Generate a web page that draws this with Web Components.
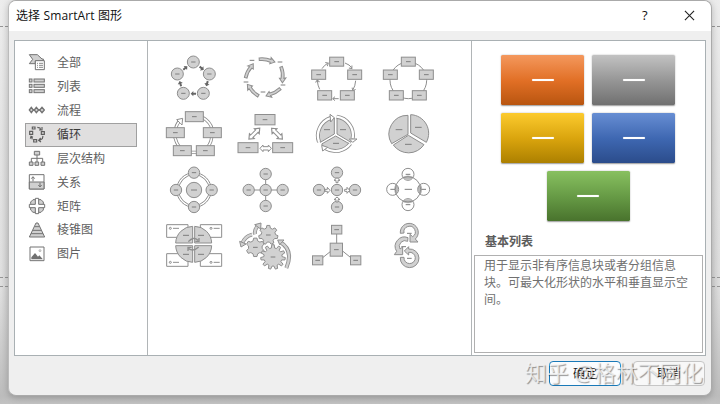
<!DOCTYPE html>
<html lang="zh-CN">
<head>
<meta charset="utf-8">
<title>选择 SmartArt 图形</title>
<style>
html,body{margin:0;width:720px;height:404px;overflow:hidden}
body{font-family:"Noto Sans","Noto Sans CJK SC",sans-serif;font-size:12px;color:#606060}
</style>
</head>
<body>
<smart-desktop>
  <smart-dialog>
    <title-bar slot="title">选择 SmartArt 图形</title-bar>
    <category-list slot="nav"></category-list>
    <layout-gallery slot="gallery"></layout-gallery>
    <layout-preview slot="preview">
      <span slot="name">基本列表</span>
      <span slot="text">用于显示非有序信息块或者分组信息块。可最大化形状的水平和垂直显示空间。</span>
    </layout-preview>
    <push-button slot="actions" primary>确定</push-button>
    <push-button slot="actions">取消</push-button>
  </smart-dialog>
  <water-mark slot="overlay">知乎 @格林不同化</water-mark>
</smart-desktop>
<script>
const define = (name, html, after) => customElements.define(name, class extends HTMLElement {
  constructor() {
    super();
    this.attachShadow({mode: 'open'}).innerHTML = typeof html === 'function' ? html() : html;
    if (after) after(this);
  }
});

define('smart-desktop', `<style>
:host{display:block;position:relative;width:720px;height:404px;overflow:hidden;box-sizing:border-box;padding:0 8px 8px;
 background:linear-gradient(90deg,#e2e2e2,#cfcfcf 8px,#cfcfcf 712px,#dedede);}
.bg{position:absolute;inset:0;background:linear-gradient(#f0f0f0cc 0,#e6e6e688 130px,#d8d8d833 290px,#bcbcbc 396px,#c2c2c2 404px)}
.dot{position:absolute;left:0;right:0;border-top:1px dashed #959595}
slot{position:relative}
</style><div class="bg"></div><div class="dot" style="top:26px"></div><div class="dot" style="top:277px"></div><div class="dot" style="top:286px"></div>
<slot></slot><slot name="overlay"></slot>`);

define('smart-dialog', `<style>
:host{display:flex;flex-direction:column;position:relative;width:704px;height:396px;box-sizing:border-box;background:#efefef;border:1px solid #aaa;border-left-color:#bbb;border-radius:8px;overflow:hidden;box-shadow:0 2px 6px #0003}
.main{display:grid;grid-template-columns:132px 323px 233px;gap:1px;margin:9px 5px 0;height:314px;border:1px solid #a9b0b3;background:#b1b5b7}
.main>*{background:#fff;min-width:0}
.foot{display:flex;justify-content:flex-end;gap:12px;padding:5px 6px 0 0}
</style><slot name="title"></slot><div class="main"><div><slot name="nav"></slot></div><div><slot name="gallery"></slot></div><div><slot name="preview"></slot></div></div>
<div class="foot"><slot name="actions"></slot></div>`);

define('title-bar', `<style>
:host{display:flex;align-items:center;height:30px;flex:none;background:#fff;color:#111;padding:0 12px 0 7px;font:12px/28px "Open Sans","Noto Sans CJK SC",sans-serif}
.t{flex:1;letter-spacing:.12px}.q{font-size:13px;width:8px;margin-right:34px;line-height:28px;padding-bottom:2px}svg{width:11px;height:11px;margin-right:4px;margin-bottom:1px}
</style><span class="t"><slot></slot></span><span class="q">?</span><svg viewBox="0 0 12 12"><path d="M1 1 11 11M11 1 1 11" stroke="#222" stroke-width="1.2"/></svg>`);

/* Category icons, drawn on a 54-unit square shown at 18px. */
const navIcons = {
  '全部': `<path class="f" d="M4 5H28L42 18H46V24H22V32H4L14 19Z"/><path class="w" d="M22 23H49V50H22Z"/><path stroke-width="2.5" d="M27 31h3M27 37h3M27 43h3M33 31h12M33 37h12M33 43h12"/>`,
  '列表': [6,22,38].map(y=>`<rect class="f" x="4" y="${y}" width="8" height="9"/><rect class="f" x="18" y="${y}" width="31" height="9"/>`).join(''),
  '流程': `<path d="M12 27H46" stroke-width="4"/><path class="f" d="M4 27 10 19 16 27 10 35ZM19 27 25 19 32 27 25 35ZM35 27 42 19 49 27 42 35Z" stroke-width="4"/>`,
  '循环': `<path d="M13 6H21V12H13ZM5 19H14V28H5ZM40 20H49V28H40ZM17 44H26V51H17ZM28 7 36 9 38 15M42 6V15H33M45 33 43 41 35 46M38 39 32 46 39 51M7 41 9 34 15 37M10 35 13 43" stroke-width="3.5"/>`,
  '层次结构': `<path d="M27 18V40M10 40V28H44V40" fill="none"/><path class="f" d="M19 7H35V18H19ZM4 39H15V49H4ZM21 39H32V49H21ZM39 39H50V49H39Z"/>`,
  '关系': `<path class="w" d="M4 5H48V48H4Z"/><path class="f" d="M4 27H48V48H4Z"/><path fill="none" d="M15 25V12M10 17 15 11 20 17M36 29V41M31 36 36 42 41 36"/>`,
  '矩阵': `<path class="f" d="M8 19V15L15 8H39L46 15V39L39 46H15L8 39Z"/><path class="w" d="M22 4H32V22H50V32H32V50H22V32H4V22H22Z"/>`,
  '棱锥图': `<path class="f" d="M24 6H30L50 48H4Z"/><path d="M20 17H34M15 28H39M9 38H45"/>`,
  '图片': `<path class="w" d="M6 6H48V47H6Z"/><path d="M10 43V37L21 24 30 35 34 31 44 42V43Z" fill="#707070" stroke="none"/><circle cx="36" cy="17" r="3" stroke="#bbb" fill="#ddd"/>`
};
define('category-item', `<style>
:host{display:flex;align-items:center;box-sizing:border-box;height:23.9px;padding:0 0 0 2px;border:1px solid transparent;line-height:20px;color:#606060}
:host([selected]){background:#e0dfdf;border:1px dotted #666;color:#3a3a3a;outline:1px solid #a0a0a0;outline-offset:-1px}
svg{width:18px;height:18px;margin:0 11px 1px 0;stroke:#737373;stroke-width:3;fill:none}
:host([selected]) svg{stroke:#5e5e5e}
.f{fill:#d0d0d0}.w{fill:#fff}span{padding-top:.5px}
</style><svg viewBox="0 0 54 54"></svg><span><slot></slot></span>`, el => {
  el.draw = k => el.shadowRoot.querySelector('svg').innerHTML = navIcons[k];
});
define('category-list', () => `<style>:host{display:block;padding:10px 10px 0}</style>` +
  Object.keys(navIcons).map(k => `<category-item${k==='循环'?' selected':''}>${k}</category-item>`).join(''),
  el => el.shadowRoot.querySelectorAll('category-item').forEach(i => i.draw(i.textContent)));

/* Gallery thumbnails: three drawing units per pixel. */
const dash = (x,y,w=14) => `<path class="d" d="M${x-w/2} ${y}h${w}"/>`;
const ball = (x,y,r=18) => `<circle class="f" cx="${x}" cy="${y}" r="${r}"/>` + dash(x,y,r>20?18:13);
const box = (x,y,w,h) => `<rect class="f" x="${x-w/2}" y="${y-h/2}" width="${w}" height="${h}"/>` + dash(x,y);
const tube = (d,w=10,c='#fff') => `<path fill="none" stroke="#8c8c8c" stroke-width="${w}" d="${d}"/><path fill="none" stroke="${c}" stroke-width="${w-5}" d="${d}"/>`;
const turn = (x,y,a,s) => `<g transform="translate(${x} ${y}) rotate(${a})">${s}</g>`;
const solid = `<path d="M-8-3H0V-8L8 0 0 8V3H-8Z" fill="#666" stroke="none"/>`;
const bent = `<path class="f" d="M-23-6Q-2-9 13-3L13-9 25 4 10 10 11 5Q-3-1-22 2Z"/>`;
const both = `<path class="w" d="M-17 0-8-10V-5H8V-10L17 0 8 10V5H-8V10Z"/>`;
const block = `<path class="w" d="M-7-3H0V-9L8 0 0 9V3H-7Z"/>`;
const gear = (x,y,r,n) => {
  let p = [];
  for (let i=0;i<n;i++) for (const [o,k] of [[-.32,.74],[-.17,1],[.17,1],[.32,.74]]) {
    const a = (i+o)*2*Math.PI/n - Math.PI/2;
    p.push((x+Math.cos(a)*r*k).toFixed(1)+' '+(y+Math.sin(a)*r*k).toFixed(1));
  }
  return `<path class="f" d="M${p.join('L')}Z"/>` + dash(x,y);
};
const thin = (x,y,a) => turn(x,y,a,`<path fill="none" d="M-6-6 1 0-6 6"/>`);
const thumbs = [
  ball(130,51)+ball(82,87)+ball(178,87)+ball(100,145)+ball(160,145)+turn(106,69,-40,solid)+turn(155,70,40,solid)+turn(171,116,107,solid)+turn(130,146,180,solid)+turn(91,116,-107,solid),
  turn(350,46,3,bent)+turn(396,88,78,bent)+turn(371,142,146,bent)+turn(309,137,219,bent)+turn(297,78,-69,bent)+dash(306,46)+dash(390,51)+dash(399,120)+dash(339,141)+dash(288,111),
  `<path fill="none" d="M66 71Q72 61 83 55M135 54Q149 59 155 68M167 107Q166 123 158 136M116 161H99M59 133Q53 121 52 107"/>`+thin(84,55,-30)+thin(155,70,50)+thin(159,136,115)+thin(99,161,180)+thin(52,106,-95)+box(110,50,42,27)+box(56,89,42,28)+box(164,89,42,28)+box(74,151,42,28)+box(142,151,42,28),
  `<circle cx="325" cy="106" r="55" fill="none"/>`+box(325,50,42,27)+box(271,89,42,28)+box(379,89,42,28)+box(289,151,42,28)+box(358,151,42,28),
  tube('M76 262Q76 240 91 226M157 217Q181 230 187 254M74 275Q78 292 89 308M185 274Q185 292 173 306M120 322H145')+`<path class="w" d="M80 224 98 220 96 240 91 235 84 228Z"/>`+box(133,215,54,30)+box(76,263,54,30)+box(187,263,54,30)+box(97,317,54,30)+box(166,317,54,30),
  box(345,224,60,31)+box(294,308,60,30)+box(398,308,60,30)+turn(313,266,-45,`<g transform="scale(1.35 1)">${both}</g>`)+turn(381,266,45,`<g transform="scale(1.35 1)">${both}</g>`)+turn(347,310,0,both),
  `<path class="f" d="M103 267V219A51 51 0 0 0 61 292ZM111 267V219A51 51 0 0 1 153 292ZM107 273 149 297A50 50 0 0 1 65 297Z"/>`+tube('M57 291A56 56 0 0 1 92 219M110 215A56 56 0 0 1 158 280M151 296A56 56 0 0 1 77 310',12)+`<path class="w" d="M90 208 103 218 92 231ZM148 282H171L158 292ZM65 301 68 318 83 307Z"/>`+dash(81,254,18)+dash(129,254,18)+dash(108,295,18),
  `<path class="f" d="M324 211A56 56 0 0 0 275 296L324 268ZM332 209A56 56 0 0 1 379 292L332 264ZM325 271 372 299A56 56 0 0 1 280 300Z"/>`+dash(297,254,20)+dash(355,247,20)+dash(325,298,20),
  `<g><circle cx="132" cy="90" r="52" fill="none"/><circle cx="132" cy="90" r="46" fill="none"/></g>`+ball(132,90,23)+ball(132,38,17)+ball(132,141,17)+ball(78,90,17)+ball(185,90,17),
  `<path d="M296 90H398M347 42V138"/>`+ball(347,90,17)+ball(347,42,17)+ball(347,138,17)+ball(296,90,17)+ball(398,90,17),
  ball(111,90,17)+ball(111,38,17)+ball(111,141,17)+ball(57,90,17)+ball(165,90,17)+turn(111,61,-90,block)+turn(111,119,-90,block)+turn(82,91,0,block)+turn(141,91,0,block),
  `<path fill="#bbb" stroke="none" d="M307 51Q324 42 341 51 324 67 307 51ZM307 125Q324 134 341 125 324 110 307 125ZM287 72Q278 88 287 104 303 88 287 72ZM362 72Q371 88 362 104 345 88 362 72Z"/><circle cx="324" cy="88" r="38" fill="none"/>`+[[324,43],[278,88],[371,88],[324,134]].map(([x,y])=>`<circle cx="${x}" cy="${y}" r="18" fill="none"/>`+dash(x,y)).join('')+dash(325,88,22),
  `<path class="w" d="M50 194H114V232H50ZM151 194H215V232H151ZM50 281H114V319H50ZM151 281H215V319H151Z"/>`+[[61,205],[183,205],[61,307],[183,307]].map(([x,y])=>`<circle cx="${x}" cy="${y}" r="3" fill="none"/><path d="M${x+8} ${y}h18"/>`).join('')+`<path d="M128 197V311M74 253H188" stroke="#fff" stroke-width="9"/><path class="f" d="M128 199V249H77A52 52 0 0 1 128 199ZM134 199A52 52 0 0 1 185 249H134ZM77 257H128V307A52 52 0 0 1 77 257ZM134 257H185A52 52 0 0 1 134 307Z"/>`+dash(108,226,18)+dash(153,226,18)+dash(108,283,18)+dash(153,283,18)+`<path fill="none" d="M115 245Q130 228 144 241M147 234V244H136M146 261Q130 276 116 266M114 273V262H125" stroke-width="4"/>`,
  tube('M276 252Q284 229 306 224M315 223Q312 211 324 196M390 246Q432 270 409 324',12,'#d1d1d1')+`<path class="f" d="M269 244 273 261 288 252ZM314 194 333 189 332 207ZM383 240 402 240 389 254Z"/>`+gear(355,225,29,7)+gear(316,262,28,6)+gear(369,291,37,11),
  `<path d="M110 220V260M97 270 54 304M124 270 166 304"/>`+box(110,209,31,26)+box(109,269,37,39)+box(53,301,31,27)+box(167,301,31,27),
  `<path class="f" d="M301 220A27 27 0 1 1 346 237L354 246H330V223L338 230A17 17 0 1 0 312 219ZM324 233A28 28 0 0 0 290 274L283 284H308V261L300 267A17 17 0 0 1 323 244ZM301 292A28 28 0 1 0 326 267V260L313 273 326 285V277A17 17 0 1 1 312 292Z"/>`+dash(328,220)+dash(311,260)+dash(328,295)
];
define('layout-gallery', () => `<style>
:host{display:grid;grid-template-columns:repeat(4,72px);grid-auto-rows:56px;padding:9px 0 0 10px}
svg{width:72px;height:56px;stroke:#8e8e8e;stroke-width:3;fill:#d3d3d3}
.f{fill:#d1d1d1}.w{fill:#fff}.d{stroke:#7e7e7e;stroke-width:3}
</style>` + thumbs.map((s,i) => `<svg viewBox="${[24,240,6,222][i%4]} ${[15,183,6,174][i>>2]} 216 168">${s}</svg>`).join(''));

define('layout-preview', `<style>
:host{display:flex;flex-direction:column;height:314px}
.tiles{display:flex;flex-wrap:wrap;justify-content:center;gap:7.5px 8px;padding:13.5px 30px 0 29px;height:167.5px;align-content:flex-start}
.tiles i{display:flex;align-items:center;justify-content:center;width:83px;height:50.6px;border-radius:1.5px;box-shadow:0 .5px 1.5px #0006}
.tiles i::before{content:"";width:22px;height:2px;background:#fff;border-radius:1px;box-shadow:0 0 1px #fff8}
.name{font-weight:bold;color:#5c5c5c;padding:0 13px;line-height:20px;margin-top:10px}
.text{box-sizing:border-box;width:229px;height:98px;margin:3px 0 0 2px;padding:2px 10px 0 9px;border:1px solid #b0b0b0;line-height:16.9px;color:#707070}
</style><div class="tiles">
<i style="background:linear-gradient(#f4985d,#e16f25 52%,#b85510)"></i><i style="background:linear-gradient(#c2c2c2,#959595 52%,#707070)"></i>
<i style="background:linear-gradient(#fccb2e,#d9a40d 52%,#ac8000)"></i><i style="background:linear-gradient(#678ed3,#3e67b1 52%,#2b4c8b)"></i>
<i style="background:linear-gradient(#88c060,#669a45 52%,#49732d)"></i></div>
<div class="name"><slot name="name"></slot></div><div class="text"><slot name="text"></slot></div>`);

define('push-button', `<style>
:host{display:flex;align-items:center;justify-content:center;box-sizing:border-box;width:72px;height:25px;border:1px solid #c6c6c6;border-radius:4px;background:#f8f8f8;color:#222;line-height:20px}
:host([primary]){border-color:#1979b8;background:#fafcfe}
</style><slot></slot>`);

define('water-mark', `<style>
:host{position:absolute;left:525px;top:358px;font:21.8px/30px "Noto Sans","Noto Sans CJK SC",sans-serif;color:#f8f8f8c0;text-shadow:1px 1px 1px #0006;white-space:nowrap}
</style><slot></slot>`);
</script>
</body>
</html>
